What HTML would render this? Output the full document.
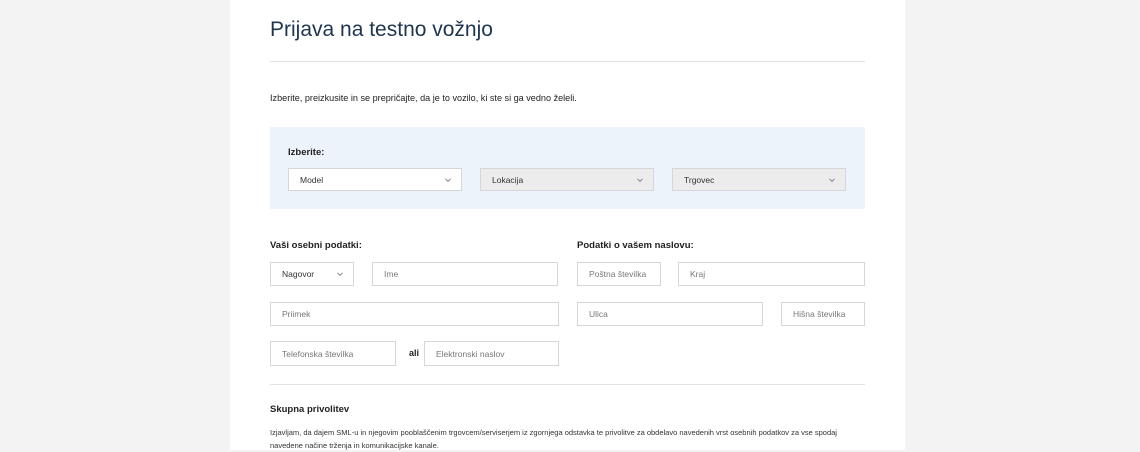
<!DOCTYPE html>
<html><head><meta charset="utf-8"><style>
*{box-sizing:border-box;margin:0;padding:0}
body{width:1140px;height:450px;background:#f3f3f3;font-family:"Liberation Sans",sans-serif;position:relative;overflow:hidden;color:#222}
.panel{position:absolute;left:230px;top:0;width:675px;height:450px;background:#fff}
.a{position:absolute}
.f{position:absolute;border:1px solid #d6d6d6;background:#fff;font-size:8.5px;color:#777;padding-left:11px;display:flex;align-items:center}
.s{color:#333}
.g{background:#ececec}
.chev{position:absolute;right:11px;top:50%;width:4px;height:4px;border-right:1px solid #888;border-bottom:1px solid #888;transform:translateY(-70%) rotate(45deg)}
.lab{position:absolute;font-size:9.5px;font-weight:bold;color:#222}
</style></head><body>
<div class="panel"></div>
<div class="a" style="left:270px;top:18px;font-size:21px;color:#1e3550">Prijava na testno vožnjo</div>
<div class="a" style="left:270px;top:61px;width:595px;height:1px;background:#e2e2e2"></div>
<div class="a" style="left:270px;top:93px;font-size:9.1px;color:#222">Izberite, preizkusite in se prepričajte, da je to vozilo, ki ste si ga vedno želeli.</div>
<div class="a" style="left:270px;top:127px;width:595px;height:82px;background:#edf3fa"></div>
<div class="lab" style="left:288px;top:147px">Izberite:</div>
<div class="f s" style="left:288px;top:168px;width:174px;height:23px">Model<span class="chev"></span></div>
<div class="f s g" style="left:480px;top:168px;width:174px;height:23px">Lokacija<span class="chev"></span></div>
<div class="f s g" style="left:672px;top:168px;width:174px;height:23px">Trgovec<span class="chev"></span></div>
<div class="lab" style="left:270px;top:240px">Vaši osebni podatki:</div>
<div class="lab" style="left:577px;top:240px">Podatki o vašem naslovu:</div>
<div class="f s" style="left:270px;top:262px;width:84px;height:24px">Nagovor<span class="chev"></span></div>
<div class="f" style="left:372px;top:262px;width:186px;height:24px">Ime</div>
<div class="f" style="left:577px;top:262px;width:84px;height:24px">Poštna številka</div>
<div class="f" style="left:678px;top:262px;width:187px;height:24px">Kraj</div>
<div class="f" style="left:270px;top:302px;width:289px;height:24px">Priimek</div>
<div class="f" style="left:577px;top:302px;width:186px;height:24px">Ulica</div>
<div class="f" style="left:781px;top:302px;width:84px;height:24px">Hišna številka</div>
<div class="f" style="left:270px;top:341px;width:126px;height:25px">Telefonska številka</div>
<div class="a" style="left:409px;top:348px;font-size:9px;font-weight:bold">ali</div>
<div class="f" style="left:424px;top:341px;width:135px;height:25px">Elektronski naslov</div>
<div class="a" style="left:270px;top:384px;width:595px;height:1px;background:#e2e2e2"></div>
<div class="lab" style="left:270px;top:404px">Skupna privolitev</div>
<div class="a" style="left:270px;top:426px;width:588px;font-size:7.5px;line-height:13px;color:#333">Izjavljam, da dajem SML-u in njegovim pooblaščenim trgovcem/serviserjem iz zgornjega odstavka te privolitve za obdelavo navedenih vrst osebnih podatkov za vse spodaj navedene načine trženja in komunikacijske kanale.</div>
</body></html>
